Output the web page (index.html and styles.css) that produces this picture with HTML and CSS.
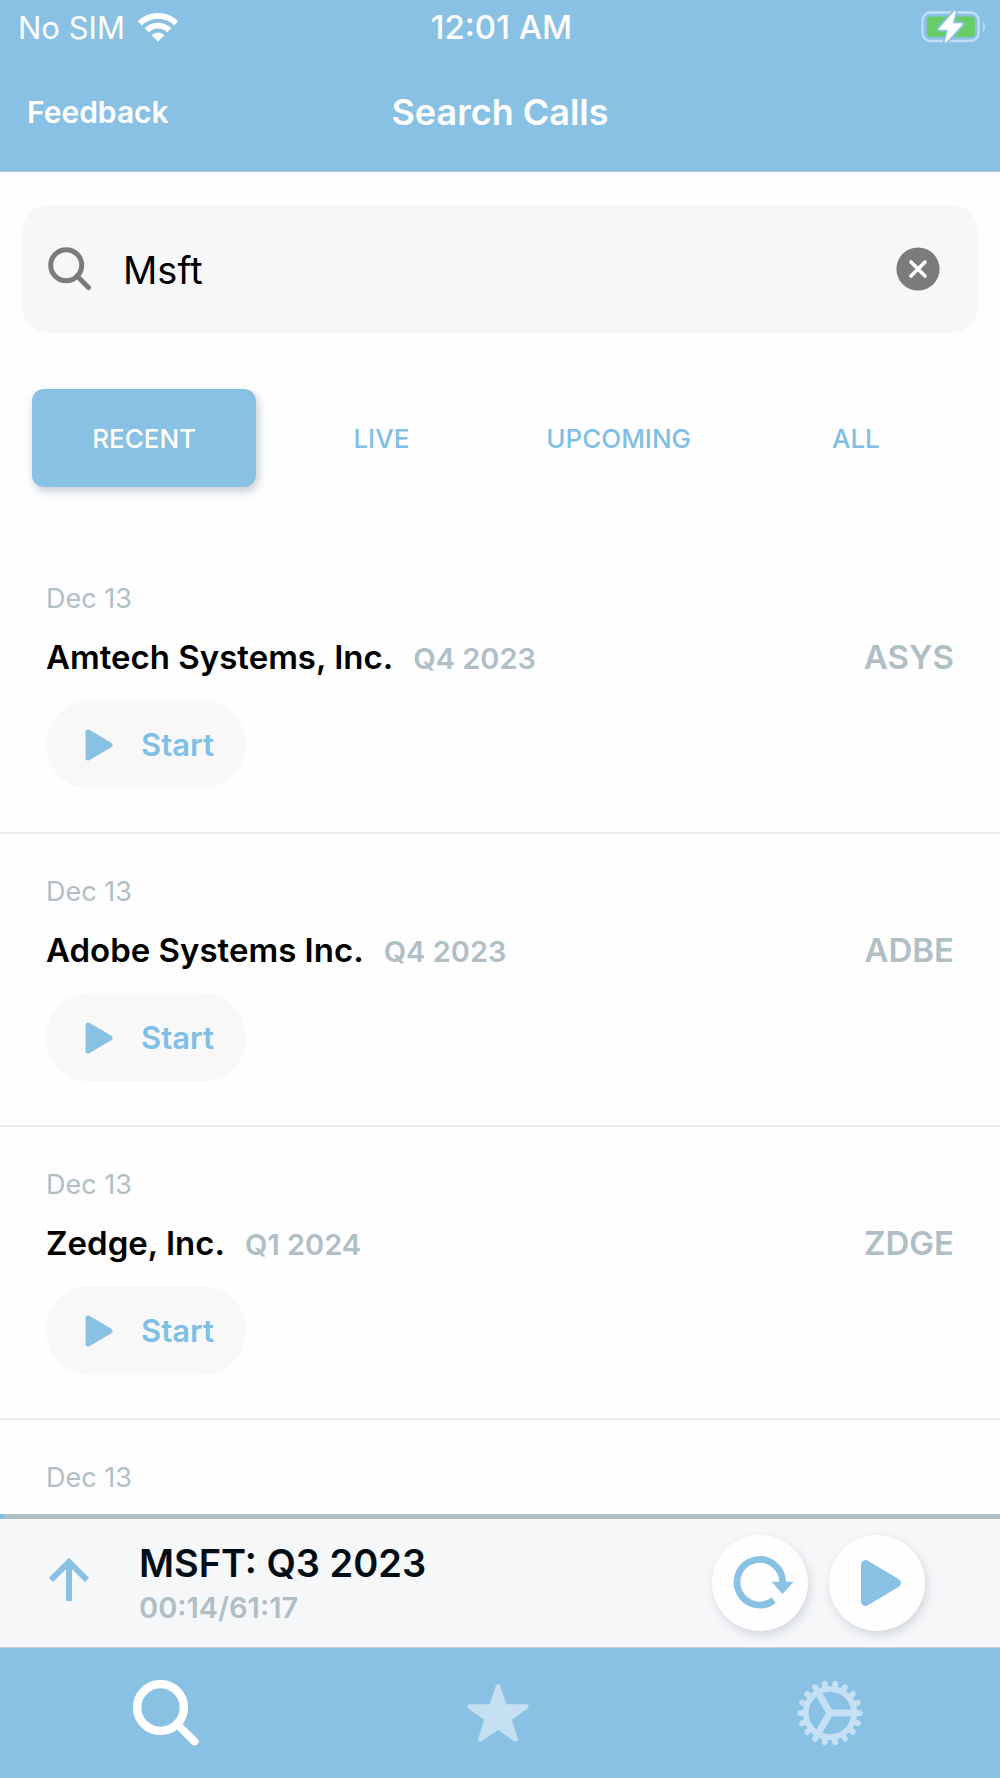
FILE: index.html
```html
<!DOCTYPE html>
<html lang="en">
<head>
<meta charset="utf-8">
<meta name="viewport" content="width=device-width, initial-scale=1">
<title>Search Calls</title>
<link rel="stylesheet" href="styles.css">
</head>
<body>
<div class="app">
  <header class="header">
    <div class="status">
      <div class="status-left">
        <span>No SIM</span>
        <svg class="wifi" viewBox="0 0 40 29" aria-hidden="true">
          <path d="M1.8 10.4A25.7 25.7 0 0 1 38.2 10.4M8.7 17.2A16 16 0 0 1 31.3 17.2" fill="none" stroke="#fff" stroke-width="5.8"/>
          <path d="M20 28.6L13.6 22.2A9 9 0 0 1 26.4 22.2Z" fill="#fff"/>
        </svg>
      </div>
      <time class="clock">12:01 AM</time>
      <svg class="battery" viewBox="0 0 64 32" aria-hidden="true">
        <rect x="1.5" y="1.5" width="56" height="28.5" rx="8" fill="none" stroke="#c0dff2" stroke-width="2.4"/>
        <rect x="6" y="5.5" width="48" height="20.5" rx="4" fill="#67ce67"/>
        <path d="M62 11q2 1.500 2 5t-2 5z" fill="#c0dff2"/>
        <path d="M34 .5L18.500 18H28L24.500 31L41 13H31Z" fill="#fff" stroke="#89c1e4" stroke-width="5" stroke-linejoin="round"/>
        <path d="M34 .5L18.500 18H28L24.500 31L41 13H31Z" fill="#fff" stroke="#fff" stroke-width="1.500" stroke-linejoin="round"/>
      </svg>
    </div>
    <nav class="titlebar">
      <a class="feedback" href="#feedback">Feedback</a>
      <h1 class="title">Search Calls</h1>
    </nav>
  </header>

  <main class="content">
    <form class="search" role="search">
      <label class="search-label" for="query" aria-label="Search">
        <svg class="search-icon" viewBox="0 0 44 44" aria-hidden="true"><g fill="none" stroke="#7b7b7b" stroke-width="5"><circle cx="18.200" cy="18.200" r="15.500"/><path d="M29 29L40.500 40.500" stroke-linecap="round"/></g></svg>
      </label>
      <input class="search-input" id="query" type="text" value="Msft">
      <button class="clear" type="button" aria-label="Clear">
        <svg class="clear-icon" viewBox="0 0 44 44" aria-hidden="true"><circle cx="22" cy="22" r="21.600" fill="#7b7b7b"/><path d="M15 15L29 29M29 15L15 29" stroke="#fff" stroke-width="3.600" stroke-linecap="round"/></svg>
      </button>
    </form>

    <div class="filters">
      <button class="filter filter-active" type="button">RECENT</button>
      <button class="filter" type="button">LIVE</button>
      <button class="filter" type="button">UPCOMING</button>
      <button class="filter" type="button">ALL</button>
    </div>

    <ul class="calls">
      <li class="call">
        <time class="date">Dec 13</time>
        <div class="call-line"><h2 class="company">Amtech Systems, Inc.</h2><span class="quarter">Q4 2023</span><span class="ticker">ASYS</span></div>
        <button class="start" type="button"><svg class="start-icon" viewBox="0 0 28 32" aria-hidden="true"><path d="M3 3V29L25 16Z" fill="#89c1e4" stroke="#89c1e4" stroke-width="5" stroke-linejoin="round"/></svg>Start</button>
      </li>
      <li class="call">
        <time class="date">Dec 13</time>
        <div class="call-line"><h2 class="company">Adobe Systems Inc.</h2><span class="quarter">Q4 2023</span><span class="ticker">ADBE</span></div>
        <button class="start" type="button"><svg class="start-icon" viewBox="0 0 28 32" aria-hidden="true"><path d="M3 3V29L25 16Z" fill="#89c1e4" stroke="#89c1e4" stroke-width="5" stroke-linejoin="round"/></svg>Start</button>
      </li>
      <li class="call">
        <time class="date">Dec 13</time>
        <div class="call-line"><h2 class="company">Zedge, Inc.</h2><span class="quarter">Q1 2024</span><span class="ticker">ZDGE</span></div>
        <button class="start" type="button"><svg class="start-icon" viewBox="0 0 28 32" aria-hidden="true"><path d="M3 3V29L25 16Z" fill="#89c1e4" stroke="#89c1e4" stroke-width="5" stroke-linejoin="round"/></svg>Start</button>
      </li>
      <li class="call">
        <time class="date">Dec 13</time>
      </li>
    </ul>
  </main>

  <section class="player">
    <div class="progress"><div class="progress-fill" style="width:0.4%"></div></div>
    <div class="player-body">
      <button class="expand" type="button" aria-label="Open player">
        <svg class="expand-icon" viewBox="0 0 40 44" aria-hidden="true"><path d="M20 43V4M2 22L20 4L38 22" fill="none" stroke="#89c1e4" stroke-width="6"/></svg>
      </button>
      <div class="track">
        <div class="track-name">MSFT: Q3 2023</div>
        <div class="track-time">00:14/61:17</div>
      </div>
      <button class="round" type="button" aria-label="Replay">
        <svg class="round-icon" viewBox="-36 -36 72 72" aria-hidden="true"><path d="M22.600-1A22.800 22.800 0 1 0 13.800 17.200" fill="none" stroke="#89c1e4" stroke-width="6.800"/><path d="M11.700-1.200H33.700L22.400 11Z" fill="#89c1e4"/></svg>
      </button>
      <button class="round" type="button" aria-label="Play">
        <svg class="round-icon" viewBox="-36 -36 72 72" aria-hidden="true"><path d="M-11.500-18.500V18.500L19.500 0Z" fill="#89c1e4" stroke="#89c1e4" stroke-width="9" stroke-linejoin="round"/></svg>
      </button>
    </div>
  </section>

  <nav class="tabbar">
    <a class="tab" href="#search" aria-label="Search">
      <svg class="tab-icon" viewBox="0 0 66 66" aria-hidden="true"><g fill="none" stroke="#fff"><circle cx="27.500" cy="27.500" r="23.400" stroke-width="8.400"/><path d="M45 45L61.500 61.500" stroke-width="8" stroke-linecap="round"/></g></svg>
    </a>
    <a class="tab" href="#favorites" aria-label="Favorites">
      <svg class="tab-icon" viewBox="-33 -33 66 66" aria-hidden="true"><path d="M0-26.500L6.800-6.500H28.500L11.200 6L17.600 26.500L0 14.200L-17.600 26.500L-11.200 6L-28.500-6.500H-6.800Z" fill="#c4e0f2" stroke="#c4e0f2" stroke-width="4.500" stroke-linejoin="round"/></svg>
    </a>
    <a class="tab" href="#settings" aria-label="Settings">
      <svg class="tab-icon" viewBox="-33 -33 66 66" aria-hidden="true">
        <g fill="none" stroke="#c4e0f2">
          <circle r="24.200" stroke-width="5.800"/>
          <path d="M22 0H0L-11-19M0 0L-11 19" stroke-width="6.900"/>
          <path stroke-width="5.800" stroke-linecap="round" d="M25 0H29.700M23.500 8.600L27.900 10.200M19.200 16.100L22.800 19.100M12.500 21.700L14.900 25.700M4.300 24.600L5.200 29.300M-4.300 24.600L-5.200 29.300M-12.500 21.700L-14.900 25.700M-19.200 16.100L-22.800 19.100M-23.500 8.600L-27.900 10.200M-25 0H-29.700M-23.500-8.600L-27.900-10.200M-19.200-16.100L-22.800-19.100M-12.500-21.700L-14.900-25.700M-4.300-24.600L-5.200-29.300M4.300-24.600L5.200-29.300M12.500-21.700L14.900-25.700M19.200-16.100L22.800-19.100M23.500-8.600L27.900-10.200"/>
        </g>
      </svg>
    </a>
  </nav>
</div>
</body>
</html>
```

FILE: styles.css
```css
:root {
  --blue: #89c1e4;
  --muted: #b0bec5;
  --panel: #f6f7f9;
}

* {
  box-sizing: border-box;
}

body,
h1,
h2,
ul {
  margin: 0;
  padding: 0;
}

body {
  background: #fefefe;
  color: #000;
  font-family: Inter, "Liberation Sans", sans-serif;
}

button {
  border: 0;
  padding: 0;
  background: none;
  font: inherit;
  cursor: pointer;
}

a {
  color: inherit;
  text-decoration: none;
}

svg {
  display: block;
  flex: none;
}

.app {
  display: flex;
  flex-direction: column;
  height: 100vh;
}

/* Header */
.header {
  flex: none;
  background: var(--blue);
  border-bottom: 1px solid #a9c6d9;
  color: #fff;
}

.status {
  display: grid;
  grid-template-columns: 1fr auto 1fr;
  align-items: center;
  height: 54px;
  padding: 0 15px 0 18px;
  font-size: 31px;
}

.status-left {
  display: flex;
  align-items: center;
  gap: 13px;
}

.wifi {
  width: 40px;
  height: 29px;
}

.clock {
  font-size: 33px;
  font-weight: 500;
}

.battery {
  width: 64px;
  height: 32px;
  justify-self: end;
}

.titlebar {
  display: grid;
  grid-template-columns: 1fr auto 1fr;
  align-items: center;
  height: 117px;
  padding: 0 27px 2px;
}

.feedback {
  font-size: 30px;
  font-weight: 600;
}

.title {
  font-size: 36px;
  font-weight: 600;
}

/* Search and filters */
.content {
  flex: 1;
  min-height: 0;
  overflow-y: auto;
  scrollbar-width: none;
}

.search {
  display: flex;
  align-items: center;
  height: 128px;
  margin: 33px 22px 56px;
  padding: 0 38px 0 26px;
  border-radius: 26px;
  background: var(--panel);
}

.search-icon,
.clear-icon {
  width: 44px;
  height: 44px;
}

.search-input {
  flex: 1;
  min-width: 0;
  padding: 2px 31px 0;
  border: 0;
  outline: 0;
  background: none;
  color: #000;
  font: inherit;
  font-size: 38px;
}

.filters {
  display: grid;
  grid-template-columns: repeat(4, 1fr);
  gap: 13px;
  padding: 0 32px;
}

.filter {
  height: 98px;
  border-radius: 12px;
  color: #7fbfe5;
  font-size: 26px;
  font-weight: 500;
}

.filter-active {
  background: var(--blue);
  box-shadow: 2px 4px 10px rgba(80, 105, 125, 0.35);
  color: #fff;
}

/* Calls */
.calls {
  padding-top: 54px;
  list-style: none;
}

.call {
  padding: 42px 46px 43px;
  border-bottom: 2px solid #ebebeb;
}

.date {
  display: block;
  color: var(--muted);
  font-size: 27px;
  line-height: 32px;
}

.call-line {
  display: flex;
  align-items: baseline;
  gap: 20px;
  padding: 22px 0 21px;
  line-height: 40px;
}

.company {
  font-size: 33px;
  font-weight: 600;
}

.quarter {
  color: var(--muted);
  font-size: 29px;
  font-weight: 600;
}

.ticker {
  margin-left: auto;
  color: var(--muted);
  font-size: 33px;
  font-weight: 600;
}

.start {
  display: flex;
  align-items: center;
  gap: 28px;
  height: 89px;
  padding: 0 32px 0 39px;
  border-radius: 45px;
  background: #f8f8f8;
  color: #7fbfe5;
  font-size: 31px;
  font-weight: 600;
}

.start-icon {
  width: 28px;
  height: 32px;
}

/* Player */
.player {
  flex: none;
  border-bottom: 1px solid #c9cfd4;
  background: var(--panel);
}

.progress {
  height: 5px;
  background: var(--muted);
}

.progress-fill {
  height: 100%;
  background: #7fbfe5;
}

.player-body {
  display: flex;
  align-items: center;
  gap: 21px;
  height: 128px;
  padding: 0 75px 0 49px;
}

.expand {
  padding-bottom: 6px;
}

.expand-icon {
  width: 40px;
  height: 44px;
}

.track {
  flex: 1;
  padding: 2px 0 0 29px;
}

.track-name {
  color: #020c14;
  font-size: 38px;
  font-weight: 600;
  line-height: 48px;
}

.track-time {
  color: var(--muted);
  font-size: 29px;
  font-weight: 600;
  line-height: 42px;
}

.round {
  display: grid;
  place-items: center;
  width: 96px;
  height: 96px;
  border-radius: 50%;
  background: #fefefe;
  box-shadow: 2px 4px 10px rgba(100, 120, 140, 0.25);
}

.round-icon {
  width: 72px;
  height: 72px;
}

/* Tab bar */
.tabbar {
  display: grid;
  grid-template-columns: repeat(3, 1fr);
  flex: none;
  height: 130px;
  padding-right: 4px;
  background: var(--blue);
}

.tab {
  display: grid;
  place-items: center;
}

.tab-icon {
  width: 66px;
  height: 66px;
}
```
